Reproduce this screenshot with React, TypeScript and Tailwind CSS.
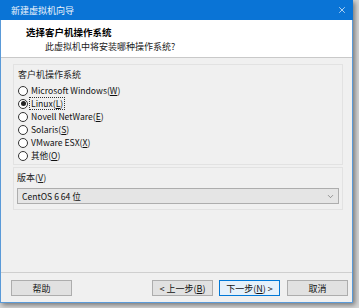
import { X, ChevronDown } from "lucide-react";

const radios = [
  { pre: "Microsoft Windows(", key: "W", post: ")" },
  { pre: "Linux(", key: "L", post: ")", checked: true },
  { pre: "Novell NetWare(", key: "E", post: ")" },
  { pre: "Solaris(", key: "S", post: ")" },
  { pre: "VMware ESX(", key: "X", post: ")" },
  { pre: "其他(", key: "O", post: ")" },
];

function Btn({ children, focus }: { children: React.ReactNode; focus?: boolean }) {
  return (
    <div
      className={`w-[61px] h-[16px] flex items-center justify-center text-[9px] leading-none text-[#111] border ${
        focus ? "border-[#0078d7] bg-[#e5f1fb]" : "border-[#adadad] bg-[#e1e1e1]"
      }`}
    >
      {children}
    </div>
  );
}

export default function App() {
  return (
    <div className="w-[359px] h-[308px] bg-[#d6d6d6] overflow-hidden font-['Noto_Sans_CJK_SC','Noto_Sans',sans-serif]">
      <div className="w-[353px] h-[303px] flex flex-col bg-[#f0f0f0] border-x border-b border-[#5a9ad8] shadow-[2px_2px_5px_rgba(0,0,0,0.45)]">
        {/* title bar */}
        <div className="h-[20px] shrink-0 bg-[#0a74d6] flex items-center justify-between pl-[11px] pr-[6px] -mx-px">
          <span className="text-[9px] text-[#eef5fc] leading-none">新建虚拟机向导</span>
          <X size={10} strokeWidth={1.6} className="text-white" />
        </div>

        {/* header */}
        <div className="h-[38px] shrink-0 bg-white border-b border-[#c9c9c9] flex flex-col pt-[6px]">
          <span className="pl-[25px] text-[9.5px] font-bold text-black leading-[13px]">选择客户机操作系统</span>
          <span className="pl-[44px] text-[9px] text-[#222] leading-[13px] mt-px">此虚拟机中将安装哪种操作系统?</span>
        </div>

        {/* body */}
        <div className="flex-1 pl-[12px] pr-[9px] pt-[6px] flex flex-col">
          <div className="h-[101px] border border-[#e2e2e2] pl-[4px] pt-[3px] flex flex-col">
            <span className="text-[9px] text-[#222] leading-[13px]">客户机操作系统</span>
            <div className="mt-[3px] flex flex-col">
              {radios.map((r) => (
                <div key={r.key} className="h-[13px] flex items-center gap-[2px]">
                  <span className="w-[10px] h-[10px] rounded-full border border-[#333] bg-white flex items-center justify-center shrink-0">
                    {r.checked && <span className="w-[5px] h-[5px] rounded-full bg-[#222]" />}
                  </span>
                  <span
                    className={`text-[8.6px] leading-[11px] text-[#111] px-px ${
                      r.checked ? "outline outline-1 outline-dotted outline-[#333]" : ""
                    }`}
                  >
                    {r.pre}
                    <span className="underline">{r.key}</span>
                    {r.post}
                  </span>
                </div>
              ))}
            </div>
          </div>

          <div className="h-[43px] mt-[2px] border border-[#e2e2e2] px-[3px] pt-[4px] flex flex-col">
            <span className="text-[9px] text-[#222] leading-[12px]">
              版本(<span className="underline">V</span>)
            </span>
            <div className="mt-[4px] h-[16px] border border-[#adadad] bg-[#e5e5e5] flex items-center justify-between pl-[4px] pr-[3px]">
              <span className="text-[8.6px] text-[#111] leading-none">CentOS 6 64 位</span>
              <ChevronDown size={9} strokeWidth={1.5} className="text-[#555]" />
            </div>
          </div>
        </div>

        {/* footer */}
        <div className="h-[30px] shrink-0 border-t border-[#cfcfcf] flex items-start pt-[7px] pl-[10px] pr-[4px]">
          <Btn>帮助</Btn>
          <div className="ml-auto flex gap-[6px]">
            <Btn>
              &lt; 上一步(<span className="underline">B</span>)
            </Btn>
            <Btn focus>
              下一步(<span className="underline">N</span>) &gt;
            </Btn>
            <div className="ml-px">
              <Btn>取消</Btn>
            </div>
          </div>
        </div>
      </div>
    </div>
  );
}
